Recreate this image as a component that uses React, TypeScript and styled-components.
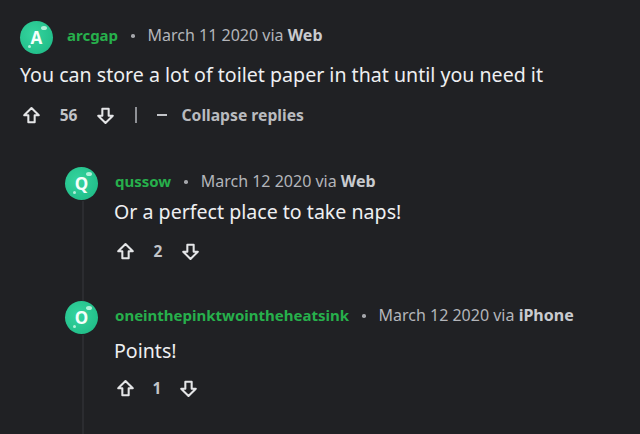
import React from "react";
import styled, { createGlobalStyle } from "styled-components";

const Global = createGlobalStyle`
  html, body { margin: 0; padding: 0; background: #202124; }
  body { font-family: "Noto Sans", "Open Sans", sans-serif; -webkit-font-smoothing: antialiased; }
`;

const Page = styled.div`
  width: 640px;
  height: 434px;
  overflow: hidden;
  box-sizing: border-box;
  padding: 21px 0 0 20px;
  background: #202124;
  color: #e6e7e9;
`;

const Header = styled.div`
  display: flex;
  align-items: center;
  height: 33px;
  gap: 13px;
  font-size: 15px;
  white-space: nowrap;
`;

const AvatarWrap = styled.div`
  position: relative;
  width: 33px;
  height: 33px;
  flex: 0 0 33px;
  border-radius: 50%;
  background: radial-gradient(circle at 40% 40%, #35d49e 0%, #23c08b 70%, #1aa877 100%);
  display: flex;
  align-items: center;
  justify-content: center;
  color: #f4fffb;
  font-weight: 700;
  font-size: 17px;
`;

const Shine = styled.span<{ $x: number; $y: number; $w: number; $h: number }>`
  position: absolute;
  left: ${(p) => p.$x}px;
  top: ${(p) => p.$y}px;
  width: ${(p) => p.$w}px;
  height: ${(p) => p.$h}px;
  border-radius: 50%;
  background: rgba(220, 255, 240, 0.75);
`;

const Avatar = ({ letter }: { letter: string }) => (
  <AvatarWrap>
    <Shine $x={21} $y={5} $w={6} $h={4} />
    <Shine $x={8} $y={24} $w={3} $h={3} />
    {letter}
  </AvatarWrap>
);

const User = styled.span`
  color: #27b04c;
  font-weight: 700;
  margin-left: 1px;
  margin-bottom: 5px;
`;

const Dot = styled.span`
  width: 3.5px;
  height: 3.5px;
  margin-bottom: 3px;
  border-radius: 50%;
  background: #a4a6ab;
`;

const Meta = styled.span`
  color: #b3b5ba;
  font-size: 16px;
  margin-bottom: 5px;
  b {
    color: #c9cbcf;
    font-weight: 700;
  }
`;

const Body = styled.div<{ $mt: number }>`
  margin-top: ${(p) => p.$mt}px;
  font-size: 19.6px;
  line-height: 24px;
  color: #eeeff1;
  white-space: nowrap;
`;

const Actions = styled.div<{ $mt: number }>`
  display: flex;
  align-items: center;
  height: 20px;
  margin-top: ${(p) => p.$mt}px;
  margin-left: 2px;
  color: #c2c4c8;
  font-size: 15.5px;
  font-weight: 700;
`;

const Count = styled.span<{ $w: number }>`
  display: inline-block;
  width: ${(p) => p.$w}px;
  text-align: center;
`;

const Sep = styled.span`
  width: 1.5px;
  height: 16px;
  background: #8f9196;
  margin: 0 20px 0 20px;
`;

const Collapse = styled.span`
  display: flex;
  align-items: center;
  gap: 15px;
  color: #b9bbbf;
  font-size: 15.7px;
  &::before {
    content: "";
    width: 10px;
    height: 2.5px;
    background: #c2c4c8;
  }
`;

const Reply = styled.div<{ $mt: number }>`
  display: grid;
  grid-template-columns: 33px 1fr;
  column-gap: 16px;
  margin-left: 45px;
  margin-top: ${(p) => p.$mt}px;
  height: 134px;
`;

const Rail = styled.div`
  display: flex;
  flex-direction: column;
  align-items: center;
`;

const Thread = styled.div`
  flex: 1;
  width: 2px;
  margin-top: 1px;
  background: #2b2c30;
  margin-left: 2px;
`;

const Content = styled.div`
  display: flex;
  flex-direction: column;
`;

const Arrow = ({ down }: { down?: boolean }) => (
  <svg width="19" height="19" viewBox="0 0 24 24" style={{ transform: down ? "rotate(180deg)" : undefined }}>
    <path
      d="M12 2.5 L2.8 11.8 H8 V20.5 H16 V11.8 H21.2 Z"
      fill="none"
      stroke="#e4e5e7"
      strokeWidth="2.6"
      strokeLinejoin="round"
    />
  </svg>
);

const Votes = ({ n, w }: { n: number; w: number }) => (
  <>
    <Arrow />
    <Count $w={w}>{n}</Count>
    <Arrow down />
  </>
);

export default function App() {
  return (
    <Page>
      <Global />
      <Header>
        <Avatar letter="A" />
        <User>arcgap</User>
        <Dot />
        <Meta>
          March 11 2020 via <b>Web</b>
        </Meta>
      </Header>
      <Body $mt={9}>You can store a lot of toilet paper in that until you need it</Body>
      <Actions $mt={18}>
        <Votes n={56} w={55} />
        <Sep />
        <Collapse>Collapse replies</Collapse>
      </Actions>

      <Reply $mt={42}>
        <Rail>
          <Avatar letter="Q" />
          <Thread />
        </Rail>
        <Content>
          <Header>
            <User>qussow</User>
            <Dot />
            <Meta>
              March 12 2020 via <b>Web</b>
            </Meta>
          </Header>
          <Body $mt={0}>Or a perfect place to take naps!</Body>
          <Actions $mt={17}>
            <Votes n={2} w={46} />
          </Actions>
        </Content>
      </Reply>

      <Reply $mt={0}>
        <Rail>
          <Avatar letter="O" />
          <Thread />
        </Rail>
        <Content>
          <Header>
            <User>oneinthepinktwointheheatsink</User>
            <Dot />
            <Meta>
              March 12 2020 via <b>iPhone</b>
            </Meta>
          </Header>
          <Body $mt={5}>Points!</Body>
          <Actions $mt={15}>
            <Votes n={1} w={44} />
          </Actions>
        </Content>
      </Reply>
    </Page>
  );
}
